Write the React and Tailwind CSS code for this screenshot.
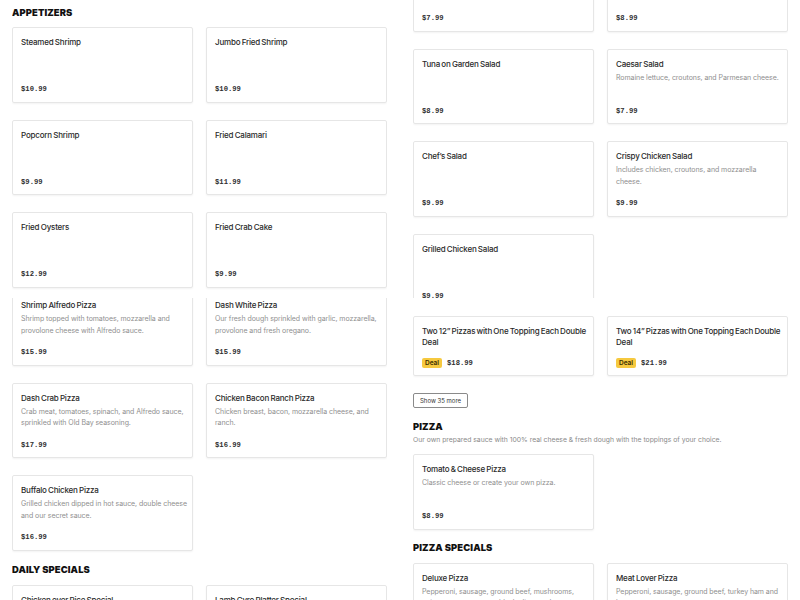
const appetizers = [
  { name: "Steamed Shrimp", price: "$10.99" },
  { name: "Jumbo Fried Shrimp", price: "$10.99" },
  { name: "Popcorn Shrimp", price: "$9.99" },
  { name: "Fried Calamari", price: "$11.99" },
  { name: "Fried Oysters", price: "$12.99" },
  { name: "Fried Crab Cake", price: "$9.99" },
];

const pizzaCont = [
  {
    name: "Shrimp Alfredo Pizza",
    desc: "Shrimp topped with tomatoes, mozzarella and provolone cheese with Alfredo sauce.",
    price: "$15.99",
  },
  {
    name: "Dash White Pizza",
    desc: "Our fresh dough sprinkled with garlic, mozzarella, provolone and fresh oregano.",
    price: "$15.99",
  },
  {
    name: "Dash Crab Pizza",
    desc: "Crab meat, tomatoes, spinach, and Alfredo sauce, sprinkled with Old Bay seasoning.",
    price: "$17.99",
  },
  {
    name: "Chicken Bacon Ranch Pizza",
    desc: "Chicken breast, bacon, mozzarella cheese, and ranch.",
    price: "$16.99",
  },
  {
    name: "Buffalo Chicken Pizza",
    desc: "Grilled chicken dipped in hot sauce, double cheese and our secret sauce.",
    price: "$16.99",
  },
];

const dailySpecials = [
  { name: "Chicken over Rice Special", desc: "", price: "$10.99" },
  { name: "Lamb Gyro Platter Special", desc: "", price: "$11.99" },
];

const salads = [
  { name: "Garden Salad", price: "$7.99" },
  { name: "Chicken Salad", price: "$8.99" },
  { name: "Tuna on Garden Salad", price: "$8.99" },
  { name: "Caesar Salad", desc: "Romaine lettuce, croutons, and Parmesan cheese.", price: "$7.99" },
  { name: "Chef’s Salad", price: "$9.99" },
  {
    name: "Crispy Chicken Salad",
    desc: "Includes chicken, croutons, and mozzarella cheese.",
    price: "$9.99",
  },
  { name: "Grilled Chicken Salad", price: "$9.99" },
];

const deals = [
  { name: "Two 12” Pizzas with One Topping Each Double Deal", price: "$18.99", deal: true },
  { name: "Two 14” Pizzas with One Topping Each Double Deal", price: "$21.99", deal: true },
];

const pizzaSpecials = [
  {
    name: "Deluxe Pizza",
    desc: "Pepperoni, sausage, ground beef, mushrooms, onions, green peppers, black olives and extra cheese.",
    price: "$18.99",
  },
  {
    name: "Meat Lover Pizza",
    desc: "Pepperoni, sausage, ground beef, turkey ham and bacon.",
    price: "$18.99",
  },
];

function Card({ item, short }) {
  return (
    <div
      className={`flex flex-col justify-between bg-white border border-[#e6e6e6] rounded-[2px] shadow-[0_1px_2px_rgba(0,0,0,0.05)] pl-[8px] pr-[5px] pt-[9px] pb-[6px] ${
        short ? "h-[60px]" : "h-[75.5px]"
      }`}
    >
      <div>
        <div className="text-[8px] leading-[11px] font-medium tracking-[-0.2px] [word-spacing:-0.6px] text-[#2a2a2a]">
          {item.name}
        </div>
        {item.desc && (
          <div className="mt-[2px] text-[7px] leading-[11.5px] tracking-[-0.06px] text-[#8f8f8f]">
            {item.desc}
          </div>
        )}
      </div>
      <div className="flex items-center gap-[5px] h-[12px]">
        {item.deal && (
          <span className="bg-[#f6c93f] text-[#3a2e00] text-[6.5px] font-semibold leading-[10px] px-[3px] rounded-[2px]">
            Deal
          </span>
        )}
        <span
          className="text-[7.2px] font-bold text-[#2e2e2e]"
          style={{ fontFamily: '"Liberation Mono", "DejaVu Sans Mono", monospace' }}
        >
          {item.price}
        </span>
      </div>
    </div>
  );
}

function Grid({ items, short }) {
  return (
    <div className="grid grid-cols-2 gap-x-[13px] gap-y-[17px]">
      {items.map((it) => (
        <Card key={it.name} item={it} short={short} />
      ))}
    </div>
  );
}

function Heading({ children }) {
  return (
    <h2 className="text-[9.4px] leading-[14px] font-black tracking-[0.01em] text-[#111] uppercase">
      {children}
    </h2>
  );
}

export default function App() {
  return (
    <div
      className="h-screen overflow-hidden bg-white px-3 flex gap-[26px]"
      style={{ fontFamily: 'Inter, "Noto Sans", sans-serif' }}
    >
      {/* left column */}
      <div className="flex-1 flex flex-col">
        <div className="h-[298px] overflow-hidden pt-[6px]">
          <div className="mb-[7px]">
            <Heading>Appetizers</Heading>
          </div>
          <Grid items={appetizers} />
        </div>
        <div className="flex-1 overflow-hidden">
          <div className="-mt-[8px]">
            <Grid items={pizzaCont} />
          </div>
          <div className="mt-[12px] mb-[8px]">
            <Heading>Daily Specials</Heading>
          </div>
          <Grid items={dailySpecials} />
        </div>
      </div>

      {/* right column */}
      <div className="flex-1 flex flex-col">
        <div className="h-[298px] overflow-hidden">
          <div className="-mt-[44px]">
            <Grid items={salads} />
          </div>
        </div>
        <div className="flex-1 overflow-hidden pt-[18px]">
          <Grid items={deals} short />
          <button className="mt-[17px] h-[15px] px-[6px] border border-[#8a8a8a] rounded-[2px] text-[6px] text-[#333] bg-white">
            Show 35 more
          </button>
          <div className="mt-[11px]">
            <Heading>Pizza</Heading>
            <p className="text-[6.8px] leading-[12px] text-[#8a8a8a]">
              Our own prepared sauce with 100% real cheese &amp; fresh dough with the toppings of your choice.
            </p>
          </div>
          <div className="mt-[8px]">
            <Grid
              items={[
                { name: "Tomato & Cheese Pizza", desc: "Classic cheese or create your own pizza.", price: "$8.99" },
              ]}
            />
          </div>
          <div className="mt-[11px] mb-[8px]">
            <Heading>Pizza Specials</Heading>
          </div>
          <Grid items={pizzaSpecials} />
        </div>
      </div>
    </div>
  );
}
